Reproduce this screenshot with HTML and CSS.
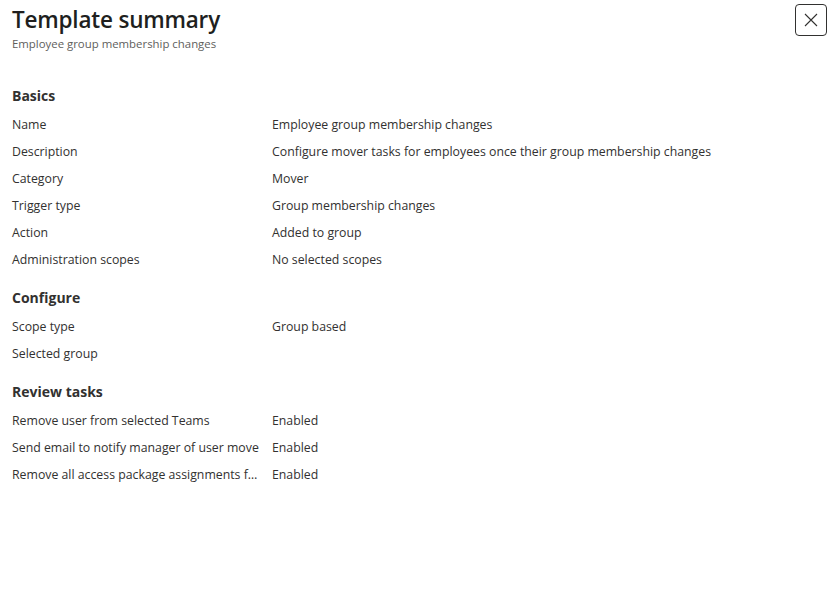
FILE: index.html
```html
<!DOCTYPE html>
<html lang="en">
<head>
<meta charset="utf-8">
<title>Template summary</title>
<link rel="stylesheet" href="styles.css">
</head>
<body>
<div class="panel">
  <header class="panel-header">
    <div class="heading">
      <h1 class="title">Template summary</h1>
      <div class="subtitle">Employee group membership changes</div>
    </div>
    <button class="close-btn" aria-label="Close">
      <svg width="14" height="14" viewBox="0 0 14 14" aria-hidden="true">
        <path d="M1 1 L13 13 M13 1 L1 13" stroke="#323130" stroke-width="1.1" fill="none"/>
      </svg>
    </button>
  </header>

  <section class="section first">
    <h2 class="section-title">Basics</h2>
    <div class="row"><div class="label">Name</div><div class="value">Employee group membership changes</div></div>
    <div class="row"><div class="label">Description</div><div class="value">Configure mover tasks for employees once their group membership changes</div></div>
    <div class="row"><div class="label">Category</div><div class="value">Mover</div></div>
    <div class="row"><div class="label">Trigger type</div><div class="value">Group membership changes</div></div>
    <div class="row"><div class="label">Action</div><div class="value">Added to group</div></div>
    <div class="row"><div class="label">Administration scopes</div><div class="value">No selected scopes</div></div>
  </section>

  <section class="section">
    <h2 class="section-title">Configure</h2>
    <div class="row"><div class="label">Scope type</div><div class="value">Group based</div></div>
    <div class="row"><div class="label">Selected group</div><div class="value"></div></div>
  </section>

  <section class="section">
    <h2 class="section-title">Review tasks</h2>
    <div class="row"><div class="label">Remove user from selected Teams</div><div class="value">Enabled</div></div>
    <div class="row"><div class="label">Send email to notify manager of user move</div><div class="value">Enabled</div></div>
    <div class="row"><div class="label"><span class="clip">Remove all access package assignments for user</span></div><div class="value">Enabled</div></div>
  </section>
</div>
</body>
</html>
```

FILE: styles.css
```css
* {
  box-sizing: border-box;
}

html, body {
  margin: 0;
  padding: 0;
  background: #ffffff;
}

body {
  font-family: "Open Sans", "Noto Sans", "Liberation Sans", sans-serif;
  color: #323130;
  font-size: 12.3px;
}

.panel {
  padding: 0 9px 0 12px;
}

.panel-header {
  display: flex;
  justify-content: space-between;
  align-items: flex-start;
  padding-top: 4px;
}

.title {
  margin: 0;
  font-size: 22.5px;
  font-weight: 600;
  line-height: 32px;
  color: #201f1e;
  letter-spacing: -0.2px;
}

.subtitle {
  font-size: 11.4px;
  line-height: 16px;
  color: #605e5c;
}

.close-btn {
  width: 32px;
  height: 32px;
  border: 1px solid #323130;
  border-radius: 4px;
  background: #ffffff;
  display: flex;
  align-items: center;
  justify-content: center;
  padding: 0;
  cursor: pointer;
}

.section {
  margin-top: 15px;
}

.section.first {
  margin-top: 34px;
}

.section-title {
  margin: 0 0 5px 0;
  font-size: 14px;
  font-weight: 700;
  line-height: 20px;
  color: #323130;
}

.row {
  display: flex;
  height: 27px;
  align-items: center;
}

.label {
  width: 260px;
  flex: none;
  padding-right: 12px;
  white-space: nowrap;
}

/* long labels are truncated to the column */
.clip {
  display: block;
  overflow: hidden;
  text-overflow: ellipsis;
}

.value {
  white-space: nowrap;
}
```
